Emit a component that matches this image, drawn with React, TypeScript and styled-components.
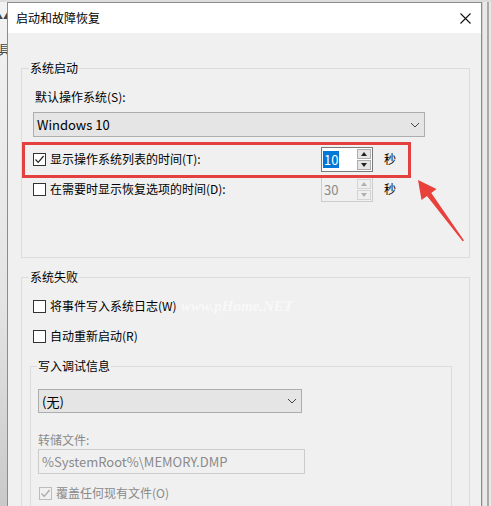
import React from "react";
import styled, { createGlobalStyle } from "styled-components";

const Global = createGlobalStyle`
  html, body { margin: 0; padding: 0; background: #e6e6e6; }
  body { font-family: "Noto Sans CJK SC", "Noto Sans", sans-serif; font-size: 12px; color: #000; }
`;

const Page = styled.div`
  position: relative;
  width: 491px;
  height: 506px;
  overflow: hidden;
  display: flex;
  padding-top: 2px;
  box-sizing: border-box;
  background: #dcdcdc;
`;

const LeftStrip = styled.div`
  width: 7px;
  flex: none;
  background: linear-gradient(#f2f2f2, #e4e4e4 60%, #c9c9c9);
  overflow: hidden;
  display: flex;
  flex-direction: column;
  align-items: flex-end;
  color: #444;
`;

const LeftGlyph = styled.span<{ $top: number; $size: number }>`
  margin-top: ${(p) => p.$top}px;
  font-size: ${(p) => p.$size}px;
  line-height: 1;
  white-space: nowrap;
  margin-right: -4px;
`;

const RightStrip = styled.div`
  width: 9px;
  flex: none;
  background: #e9e9e9;
  border-left: 1px solid #cfcfcf;
  box-sizing: border-box;
  display: flex;
  justify-content: center;
`;

const RightLine = styled.div`
  width: 2px;
  margin-left: 1px;
  background: #a9a9a9;
`;

const Dialog = styled.div`
  width: 475px;
  flex: none;
  border: 1px solid #8c8c8c;
  border-bottom: none;
  box-sizing: border-box;
  display: flex;
  flex-direction: column;
  background: #f0f0f0;
`;

const TitleBar = styled.div`
  height: 30px;
  background: #fff;
  display: flex;
  align-items: center;
  justify-content: space-between;
  padding: 0 10px 0 8px;
  flex: none;
`;

const Title = styled.span`
  font-size: 12px;
  line-height: 16px;
`;

const Body = styled.div`
  padding: 27px 11px 0 13px;
  display: flex;
  flex-direction: column;
`;

const Group = styled.fieldset<{ $pl: number; $pb: number; $mt?: number; $mr?: number }>`
  margin: ${(p) => p.$mt ?? 0}px ${(p) => p.$mr ?? 0}px 0 0;
  padding: 0 0 ${(p) => p.$pb}px ${(p) => p.$pl}px;
  border: 1px solid #dcdcdc;
  min-width: 0;
  display: flex;
  flex-direction: column;
  align-items: flex-start;
  align-self: stretch;
`;

const Legend = styled.legend<{ $ml: number }>`
  margin-left: ${(p) => p.$ml}px;
  padding: 0 1px;
  font-size: 12px;
  line-height: 16px;
  height: 16px;
  color: #000;
`;

const Label = styled.div<{ $mt: number; $ml?: number; $disabled?: boolean }>`
  margin-top: ${(p) => p.$mt}px;
  margin-left: ${(p) => p.$ml ?? 0}px;
  line-height: 16px;
  height: 16px;
  color: ${(p) => (p.$disabled ? "#8a8a8a" : "#000")};
`;

const Select = styled.div<{ $w: number; $h: number; $mt: number }>`
  margin-top: ${(p) => p.$mt}px;
  width: ${(p) => p.$w}px;
  height: ${(p) => p.$h}px;
  box-sizing: border-box;
  border: 1px solid #adadad;
  background: #e5e5e5;
  display: flex;
  align-items: center;
  justify-content: space-between;
  padding: 0 4px 0 3px;
  font-size: 13px;
`;

const TextField = styled.div<{ $w: number; $mt: number }>`
  margin-top: ${(p) => p.$mt}px;
  width: ${(p) => p.$w}px;
  height: 25px;
  box-sizing: border-box;
  border: 1px solid #cccccc;
  background: #f0f0f0;
  display: flex;
  align-items: center;
  padding: 0 3px;
  color: #8a8a8a;
  font-size: 13px;
`;

const Row = styled.div<{ $mt: number; $h: number; $ml?: number }>`
  margin-top: ${(p) => p.$mt}px;
  margin-left: ${(p) => p.$ml ?? 0}px;
  height: ${(p) => p.$h}px;
  display: flex;
  align-items: center;
`;

const CheckLabel = styled.label<{ $w?: number; $disabled?: boolean }>`
  display: flex;
  align-items: center;
  gap: 4px;
  width: ${(p) => (p.$w ? `${p.$w}px` : "auto")};
  line-height: 16px;
  color: ${(p) => (p.$disabled ? "#8a8a8a" : "#000")};
`;

const Box = styled.span<{ $disabled?: boolean }>`
  width: 13px;
  height: 13px;
  box-sizing: border-box;
  border: 1px solid ${(p) => (p.$disabled ? "#bcbcbc" : "#333")};
  background: ${(p) => (p.$disabled ? "#f0f0f0" : "#fff")};
  display: inline-flex;
  align-items: center;
  justify-content: center;
  flex: none;
`;

const Spin = styled.div<{ $active?: boolean }>`
  width: 52px;
  height: 25px;
  box-sizing: border-box;
  border: 1px solid ${(p) => (p.$active ? "#7a7a7a" : "#cccccc")};
  background: ${(p) => (p.$active ? "#fff" : "#f0f0f0")};
  display: flex;
  align-items: stretch;
`;

const SpinValue = styled.div<{ $active?: boolean }>`
  flex: 1;
  display: flex;
  align-items: center;
  padding-left: 1px;
  font-size: 13px;
  color: ${(p) => (p.$active ? "#fff" : "#8a8a8a")};
`;

const Sel = styled.span<{ $active?: boolean }>`
  background: ${(p) => (p.$active ? "#0078d7" : "transparent")};
  padding: 0 1px;
  line-height: 17px;
`;

const SpinButtons = styled.div`
  width: 16px;
  display: flex;
  flex-direction: column;
  gap: 1px;
  padding: 1px;
  box-sizing: border-box;
`;

const SpinBtn = styled.div<{ $active?: boolean }>`
  flex: 1;
  border: 1px solid ${(p) => (p.$active ? "#adadad" : "#d4d4d4")};
  background: ${(p) => (p.$active ? "#e5e5e5" : "#efefef")};
  display: flex;
  align-items: center;
  justify-content: center;
`;

const Unit = styled.span`
  margin-left: 11px;
  line-height: 16px;
`;

const Highlight = styled.div`
  position: absolute;
  left: 22px;
  top: 142px;
  width: 389px;
  height: 36px;
  box-sizing: border-box;
  border: 3px solid #e2413f;
  pointer-events: none;
`;

const ArrowSvg = styled.svg`
  position: absolute;
  left: 0;
  top: 0;
  pointer-events: none;
`;

const Watermark = styled.div`
  position: absolute;
  left: 181px;
  top: 298px;
  font-family: "Liberation Serif", serif;
  font-weight: bold;
  font-style: italic;
  font-size: 15px;
  color: rgba(255, 255, 255, 0.6);
  pointer-events: none;
`;

const Check = ({ disabled }: { disabled?: boolean }) => (
  <svg width="11" height="11" viewBox="0 0 11 11">
    <path d="M1.5 5.5 L4.2 8.3 L9.6 2" fill="none" stroke={disabled ? "#a6a6a6" : "#222"} strokeWidth="1.2" />
  </svg>
);

const CheckBox = ({ checked, disabled }: { checked?: boolean; disabled?: boolean }) => (
  <Box $disabled={disabled}>{checked ? <Check disabled={disabled} /> : null}</Box>
);

const Chevron = () => (
  <svg width="10" height="6" viewBox="0 0 10 6">
    <path d="M1 1 L5 5 L9 1" fill="none" stroke="#444" strokeWidth="1" />
  </svg>
);

const Tri = ({ up, color }: { up?: boolean; color: string }) => (
  <svg width="6" height="4" viewBox="0 0 6 4">
    <path d={up ? "M0 4 L3 0 L6 4 Z" : "M0 0 L3 4 L6 0 Z"} fill={color} />
  </svg>
);

const CloseIcon = () => (
  <svg width="11" height="11" viewBox="0 0 11 11">
    <path d="M0.5 0.5 L10.5 10.5 M10.5 0.5 L0.5 10.5" stroke="#111" strokeWidth="1.1" />
  </svg>
);

const SpinBox = ({ value, active }: { value: string; active?: boolean }) => {
  const c = active ? "#222" : "#b0b0b0";
  return (
    <Spin $active={active}>
      <SpinValue $active={active}>
        <Sel $active={active}>{value}</Sel>
      </SpinValue>
      <SpinButtons>
        <SpinBtn $active={active}>
          <Tri up color={c} />
        </SpinBtn>
        <SpinBtn $active={active}>
          <Tri color={c} />
        </SpinBtn>
      </SpinButtons>
    </Spin>
  );
};

export default function App() {
  return (
    <>
      <Global />
      <Page>
        <LeftStrip>
          <LeftGlyph $top={10} $size={8}>▲▲</LeftGlyph>
          <LeftGlyph $top={22} $size={13}>具具</LeftGlyph>
        </LeftStrip>
        <Dialog>
          <TitleBar>
            <Title>启动和故障恢复</Title>
            <CloseIcon />
          </TitleBar>
          <Body>
            <Group $pl={11} $pb={55}>
              <Legend $ml={-4}>系统启动</Legend>
              <Label $mt={13} $ml={2}>默认操作系统(S):</Label>
              <Select $w={392} $h={25} $mt={7}>
                <span>Windows 10</span>
                <Chevron />
              </Select>
              <Row $mt={9} $h={26}>
                <CheckLabel $w={288}>
                  <CheckBox checked />
                  显示操作系统列表的时间(T):
                </CheckLabel>
                <SpinBox value="10" active />
                <Unit>秒</Unit>
              </Row>
              <Row $mt={4} $h={26}>
                <CheckLabel $w={288}>
                  <CheckBox />
                  在需要时显示恢复选项的时间(D):
                </CheckLabel>
                <SpinBox value="30" />
                <Unit>秒</Unit>
              </Row>
            </Group>
            <Group $pl={8} $pb={40} $mt={11}>
              <Legend $ml={-1}>系统失败</Legend>
              <Row $mt={11} $h={20} $ml={3}>
                <CheckLabel>
                  <CheckBox />
                  将事件写入系统日志(W)
                </CheckLabel>
              </Row>
              <Row $mt={10} $h={20} $ml={3}>
                <CheckLabel>
                  <CheckBox />
                  自动重新启动(R)
                </CheckLabel>
              </Row>
              <Group $pl={7} $pb={30} $mt={12} $mr={17}>
                <Legend $ml={-1}>写入调试信息</Legend>
                <Select $w={264} $h={24} $mt={15}>
                  <span>(无)</span>
                  <Chevron />
                </Select>
                <Label $mt={19} $disabled>
                  转储文件:
                </Label>
                <TextField $w={267} $mt={1}>%SystemRoot%\MEMORY.DMP</TextField>
                <Row $mt={9} $h={20} $ml={1}>
                  <CheckLabel $disabled>
                    <CheckBox checked disabled />
                    覆盖任何现有文件(O)
                  </CheckLabel>
                </Row>
              </Group>
            </Group>
          </Body>
        </Dialog>
        <RightStrip>
          <RightLine />
        </RightStrip>
        <Highlight />
        <Watermark>www.pHome.NET</Watermark>
        <ArrowSvg width="491" height="506" viewBox="0 0 491 506">
          <polygon
            points="418,180 436.5,189 431.3,193 464,240.5 462.6,241.2 427,196 421.5,200"
            fill="#e8403a"
          />
        </ArrowSvg>
      </Page>
    </>
  );
}
